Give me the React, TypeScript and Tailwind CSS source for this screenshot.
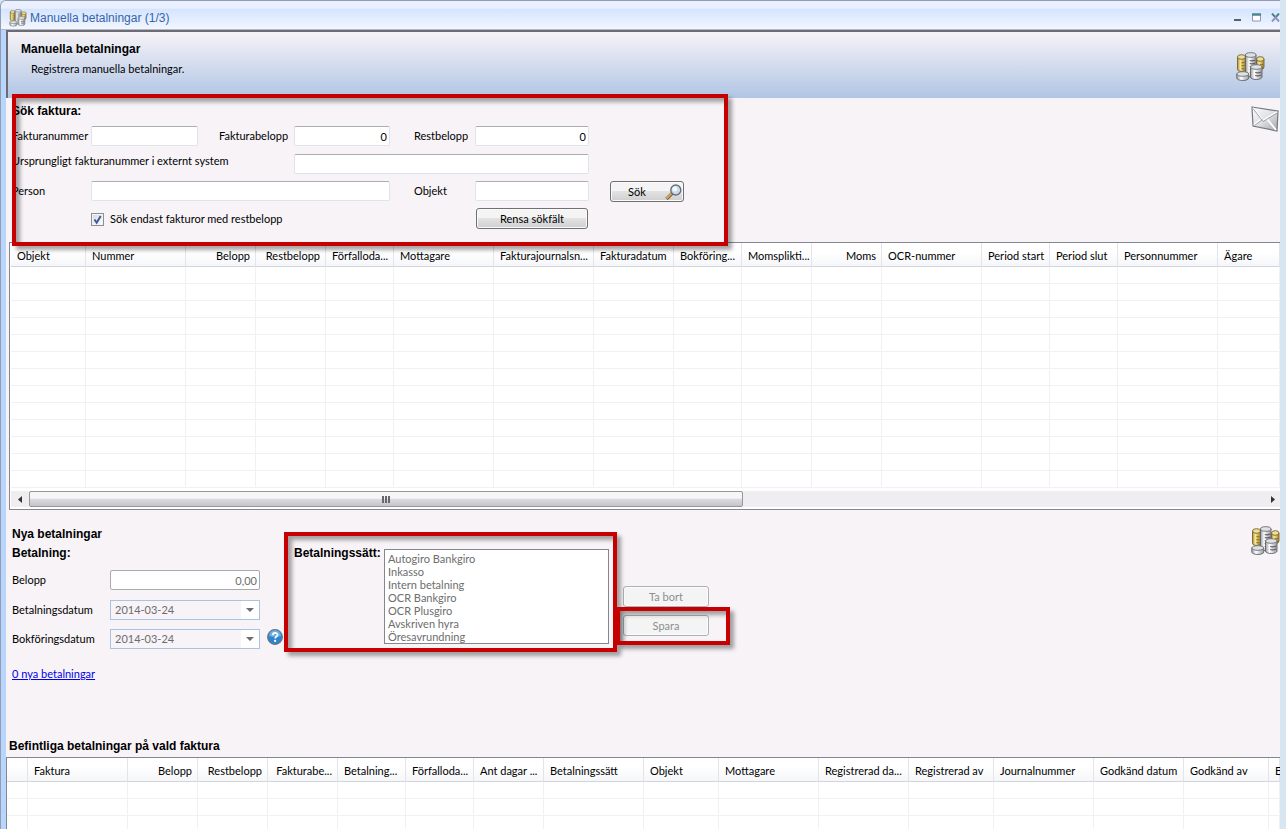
import { useState } from 'react'

type Column = { title: string; width?: number; right?: boolean }

const invoiceColumns: Column[] = [
  { title: 'Objekt', width: 75 },
  { title: 'Nummer', width: 100 },
  { title: 'Belopp', width: 70, right: true },
  { title: 'Restbelopp', width: 70, right: true },
  { title: 'Förfalloda...', width: 68 },
  { title: 'Mottagare', width: 100 },
  { title: 'Fakturajournalsn...', width: 100 },
  { title: 'Fakturadatum', width: 80 },
  { title: 'Bokföring...', width: 68 },
  { title: 'Momsplikti...', width: 70 },
  { title: 'Moms', width: 70, right: true },
  { title: 'OCR-nummer', width: 100 },
  { title: 'Period start', width: 68 },
  { title: 'Period slut', width: 68 },
  { title: 'Personnummer', width: 100 },
  { title: 'Ägare' },
]

const paymentColumns: Column[] = [
  { title: '', width: 21 },
  { title: 'Faktura', width: 100 },
  { title: 'Belopp', width: 70, right: true },
  { title: 'Restbelopp', width: 70, right: true },
  { title: 'Fakturabe...', width: 70, right: true },
  { title: 'Betalning...', width: 68 },
  { title: 'Förfalloda...', width: 68 },
  { title: 'Ant dagar ...', width: 70 },
  { title: 'Betalningssätt', width: 100 },
  { title: 'Objekt', width: 75 },
  { title: 'Mottagare', width: 100 },
  { title: 'Registrerad da...', width: 90 },
  { title: 'Registrerad av', width: 85 },
  { title: 'Journalnummer', width: 100 },
  { title: 'Godkänd datum', width: 90 },
  { title: 'Godkänd av', width: 85 },
  { title: 'E' },
]

const methods = [
  'Autogiro Bankgiro',
  'Inkasso',
  'Intern betalning',
  'OCR Bankgiro',
  'OCR Plusgiro',
  'Avskriven hyra',
  'Öresavrundning',
]

const headingClass = "font-['Liberation_Sans',Arial,sans-serif] text-xs leading-[14px] font-bold"
const inputClass =
  'h-5 rounded-[2px] border border-[#e2e3ea] border-t-[#abadb3] bg-white px-[2px] outline-none'
const buttonClass =
  'h-[21px] rounded-[3px] border border-[#707070] bg-linear-to-b from-[#f4f4f4] from-45% via-[#e2e2e2] via-50% to-[#cfcfcf] shadow-[inset_0_0_0_1px_#fafafa]'
const disabledButtonClass =
  'h-[21px] w-[86px] rounded-[3px] border border-[#adb2b5] bg-[#f4f4f4] text-[#8e8e8e] shadow-[inset_0_0_0_1px_#fcfcfc]'

function Stack({ x, y, w, h, gold }: { x: number; y: number; w: number; h: number; gold?: boolean }) {
  const rx = w / 2
  const ridges = []
  for (let i = 4; i < h; i += 3) ridges.push(i)
  return (
    <g>
      <path
        d={`M${x} ${y}v${h}a${rx} 2.5 0 0 0 ${w} 0v${-h}z`}
        fill={gold ? 'url(#gold)' : 'url(#silver)'}
        stroke={gold ? '#75622a' : '#626266'}
        strokeWidth="0.9"
      />
      {ridges.map(r => (
        <path
          key={r}
          d={`M${x + (gold ? rx : rx - 1)} ${y + r + 1.5}q${rx / 2} 1 ${gold ? rx - 1 : rx} -0.5`}
          fill="none"
          stroke={gold ? '#8c701c' : '#5a5a60'}
          strokeWidth="1.1"
        />
      ))}
      <ellipse cx={x + rx} cy={y} rx={rx} ry="2.3" fill={gold ? '#f0df98' : '#dde3e5'} stroke={gold ? '#75622a' : '#6c6c70'} strokeWidth="0.9" />
    </g>
  )
}

function Coins({ className }: { className: string }) {
  return (
    <svg viewBox="0 0 29 30" className={className} aria-hidden="true">
      <defs>
        <linearGradient id="gold">
          <stop offset="0" stopColor="#b0902f" />
          <stop offset="0.35" stopColor="#f6e9a0" />
          <stop offset="1" stopColor="#a98420" />
        </linearGradient>
        <linearGradient id="silver">
          <stop offset="0" stopColor="#9a9c9f" />
          <stop offset="0.35" stopColor="#fff" />
          <stop offset="1" stopColor="#9a9a9f" />
        </linearGradient>
      </defs>
      <Stack x={1.5} y={5} w={8} h={12} gold />
      <Stack x={20.5} y={7} w={7.5} h={8} gold />
      <Stack x={9.5} y={3} w={10.5} h={19} />
      <Stack x={14.5} y={15} w={11.5} h={10} />
      <Stack x={0.8} y={22} w={12} h={4} />
    </svg>
  )
}

function Envelope() {
  return (
    <svg viewBox="0 0 28 26" className="h-[26px] w-7" aria-hidden="true">
      <defs>
        <linearGradient id="paper" x1="0" y1="0" x2="1" y2="1">
          <stop offset="0" stopColor="#fdfdfd" />
          <stop offset="0.5" stopColor="#dfe0e3" />
          <stop offset="1" stopColor="#a4a6ac" />
        </linearGradient>
      </defs>
      <path d="M1 1l26 4-1 20L2 20z" fill="url(#paper)" stroke="#777980" strokeWidth="1.2" />
      <path d="M2 2l10 12.500L26 6M3 19l8-6M25 24l-9-11" fill="none" stroke="#fff" strokeWidth="1.800" />
      <path d="M2 2.500l10 13L26 7M3.500 19.500l8-6" fill="none" stroke="#85878d" strokeWidth="0.800" />
    </svg>
  )
}

function Magnifier() {
  return (
    <svg viewBox="0 0 17 16" className="h-4 w-[17px]" aria-hidden="true">
      <path d="M1.5 15l6-6" stroke="#7d5a2b" strokeWidth="3.2" />
      <path d="M1.5 14.5l5-5" stroke="#d9a860" strokeWidth="1.8" />
      <circle cx="10.8" cy="6" r="5" fill="#c9dcee" stroke="#6b7078" strokeWidth="1.4" />
      <circle cx="9.8" cy="5" r="2.4" fill="#f4faff" />
    </svg>
  )
}

function HelpIcon() {
  return (
    <svg viewBox="0 0 16 16" className="h-4 w-4" aria-hidden="true">
      <circle cx="8" cy="8" r="7.4" fill="#2d85cc" stroke="#6e7277" strokeWidth="1.1" />
      <path d="M2 7a6 6 0 0 1 12 0q-6 2-12 0z" fill="#67b1e6" />
      <path d="M5.7 6.2c0-3 4.8-3 4.8-.3 0 1.7-2.3 1.6-2.3 3.6" fill="none" stroke="#fff" strokeWidth="1.7" />
      <circle cx="8.1" cy="11.9" r="1.1" fill="#fff" />
    </svg>
  )
}

// Red callout drawn over the part of the form it surrounds
function Marker({ className }: { className: string }) {
  return (
    <div
      className={`pointer-events-none absolute z-10 border-4 border-[#c60000] shadow-[4px_4px_4px_rgba(0,0,0,0.35),inset_4px_4px_4px_rgba(0,0,0,0.35)] ${className}`}
    />
  )
}

function Grid({ columns, rows, label }: { columns: Column[]; rows: number; label: string }) {
  return (
    <table aria-label={label} className="w-full table-fixed border-separate border-spacing-0 bg-white">
      <colgroup>
        {columns.map((c, i) => <col key={i} style={c.width ? { width: c.width } : undefined} />)}
      </colgroup>
      <thead>
        <tr className="h-6">
          {columns.map((c, i) => (
            <th
              key={i}
              className={`border-r border-b border-r-[#e4e4ea] border-b-[#d5d5d9] bg-linear-to-b from-white from-40% to-[#f5f6fa] pt-[2px] pb-0 font-normal whitespace-nowrap ${c.right ? 'pr-[5px] text-right' : 'pl-[6px] text-left'}`}
            >
              {c.title}
            </th>
          ))}
        </tr>
      </thead>
      <tbody>
        {Array.from({ length: rows }, (_, r) => (
          <tr key={r} className="h-[17px]">
            {columns.map((_, i) => <td key={i} className="border-r border-b border-[#f3eff3] p-0" />)}
          </tr>
        ))}
      </tbody>
    </table>
  )
}

function DateField({ id }: { id: string }) {
  return (
    <div className="flex h-5 border border-[#a9c4e2]">
      <select id={id} className="min-w-0 flex-1 appearance-none pl-1 text-[#6d6d6d] outline-none">
        <option>2014-03-24</option>
      </select>
      <span className="flex w-[18px] items-center justify-center bg-white">
        <svg viewBox="0 0 8 4" className="h-1 w-2" aria-hidden="true"><path d="M0 0h8L4 4z" fill="#6d6d6d" /></svg>
      </span>
    </div>
  )
}

export default function App() {
  const [onlyRest, setOnlyRest] = useState(true)

  return (
    <div className="flex h-screen overflow-hidden bg-[#d8e6f2] pr-[6px] font-[Lato,'Liberation_Sans',sans-serif] text-[11px] leading-[14px] text-black">
      <div className="flex min-w-0 flex-1 flex-col overflow-hidden rounded-tl-md border-t border-l border-[#8f9db5] bg-[#b9d5fb]">
        <header className="flex h-[29px] shrink-0 items-center border-b border-[#b4b8c8] bg-linear-to-b from-[#eaf0fd] from-25% via-[#d5e5ff] via-30% to-[#f2f6ff] pt-[5px] pl-2">
          <Coins className="h-[18px] w-[18px]" />
          <h1 className="ml-[3px] font-['Liberation_Sans',Arial,sans-serif] text-xs text-[#3465ac]">Manuella betalningar (1/3)</h1>
          <div className="ml-auto flex gap-[10px]">
            <button aria-label="Minimera" className="h-[9px] w-[9px]">
              <svg viewBox="0 0 9 9" className="h-[9px] w-[9px]"><path d="M1 7h7" stroke="#5d6068" strokeWidth="2" /></svg>
            </button>
            <button aria-label="Maximera" className="h-[9px] w-[9px]">
              <svg viewBox="0 0 9 9" className="h-[9px] w-[9px]">
                <path d="M.5 1.500h8v6.500h-8z" fill="#fff" stroke="#8f92c8" />
                <path d="M0 1.500h9" stroke="#4c8587" strokeWidth="2.500" />
              </svg>
            </button>
            <button aria-label="Stäng" className="h-[9px] w-[9px]">
              <svg viewBox="0 0 9 9" className="h-[9px] w-[9px]">
                <path d="M1 .5l3.500 4L8 .5" fill="none" stroke="#4c8587" strokeWidth="2" />
                <path d="M1 8.500l3.500-4 3.500 4" fill="none" stroke="#8f92c8" strokeWidth="2" />
              </svg>
            </button>
          </div>
        </header>

        <main className="ml-[5px] flex-1 bg-[#f7f3f7]">
          <div className="flex h-[68px] items-start justify-between border-t-2 border-l-2 border-[#6c6c74] bg-linear-to-b from-[#f7f3f7] to-[#b0c5e4] pr-[15px]">
            <div className="pt-[10px] pl-[13px]">
              <h2 className={headingClass}>Manuella betalningar</h2>
              <p className="mt-[6px] ml-[10px]">Registrera manuella betalningar.</p>
            </div>
            <Coins className="mt-5 h-[30px] w-[29px]" />
          </div>

          <section className="relative flex h-[144px] items-start justify-between pr-px pl-[6px]">
            <Marker className="-top-1 left-[6px] h-[152px] w-[716px]" />
            <div className="pt-[6px]">
              <h2 className={headingClass}>Sök faktura:</h2>
              <div className="mt-2 grid grid-cols-[79px_128px_75px_120px_61px_135px_74px] grid-rows-[28px_27px_27px_21px] items-start">
                <label htmlFor="nr" className="pt-[3px]">Fakturanummer</label>
                <input id="nr" className={`${inputClass} w-[107px]`} />
                <label htmlFor="amount" className="pt-[3px]">Fakturabelopp</label>
                <input id="amount" defaultValue="0" className={`${inputClass} w-24 text-right`} />
                <label htmlFor="rest" className="pt-[3px]">Restbelopp</label>
                <input id="rest" defaultValue="0" className={`${inputClass} w-[114px] text-right`} />

                <label htmlFor="ext" className="col-span-3 col-start-1">Ursprungligt fakturanummer i externt system</label>
                <input id="ext" className={`${inputClass} col-span-3 w-[295px]`} />

                <label htmlFor="person" className="col-start-1 pt-[3px]">Person</label>
                <input id="person" className={`${inputClass} col-span-3 w-[299px]`} />
                <label htmlFor="object" className="pt-[3px]">Objekt</label>
                <input id="object" className={`${inputClass} w-[114px]`} />
                <button className={`${buttonClass} flex items-center justify-between pr-px pl-[17px]`}>
                  Sök
                  <Magnifier />
                </button>

                <label className="col-span-4 col-start-2 flex items-center gap-[6px] pt-1">
                  <span className="relative h-[13px] w-[13px]">
                    <input
                      type="checkbox"
                      checked={onlyRest}
                      onChange={e => setOnlyRest(e.target.checked)}
                      className="block h-[13px] w-[13px] appearance-none border border-[#8e8f8f] bg-linear-to-br from-[#d3d8de] to-white shadow-[inset_0_0_0_1px_#f4f4f4]"
                    />
                    {onlyRest && (
                      <svg viewBox="0 0 13 13" className="pointer-events-none absolute inset-0 h-[13px] w-[13px]">
                        <path d="M3.500 6.500l2.200 3.200L9.700 3" fill="none" stroke="#3f5a9c" strokeWidth="2" />
                      </svg>
                    )}
                  </span>
                  Sök endast fakturor med restbelopp
                </label>
                <button className={`${buttonClass} ml-px w-28`}>Rensa sökfält</button>
              </div>
            </div>
            <div className="pt-2"><Envelope /></div>
          </section>

          <div className="ml-[3px] border border-r-0 border-[#828790] bg-white pl-px">
            <Grid columns={invoiceColumns} rows={13} label="Fakturor" />
            <div className="mt-[3px] mb-[2px] flex h-4 bg-[#efedef]">
              <button aria-label="Vänster" className="flex w-[18px] items-center justify-center">
                <svg viewBox="0 0 4 7" className="h-[7px] w-1"><path d="M4 0v7L0 3.500z" fill="#333" /></svg>
              </button>
              <div className="flex w-[714px] items-center justify-center gap-px rounded-[2px] border border-[#97979b] bg-linear-to-b from-[#f6f6f6] from-45% via-[#dcdce0] via-50% to-[#c4c4c9]">
                <i className="h-[7px] w-[2px] bg-[#66666b]" />
                <i className="h-[7px] w-[2px] bg-[#66666b]" />
                <i className="h-[7px] w-[2px] bg-[#66666b]" />
              </div>
              <button aria-label="Höger" className="ml-auto flex w-[14px] items-center justify-center">
                <svg viewBox="0 0 4 7" className="h-[7px] w-1"><path d="M0 0v7l4-3.500z" fill="#333" /></svg>
              </button>
            </div>
          </div>

          <section className="flex h-[229px] items-start pl-[6px]">
            <div className="w-[272px] pt-[17px]">
              <h2 className={headingClass}>Nya betalningar</h2>
              <h3 className={`${headingClass} mt-[5px]`}>Betalning:</h3>
              <div className="mt-[10px] grid grid-cols-[98px_150px_16px] grid-rows-[30px_29px_29px] items-start">
                <label htmlFor="sum" className="pt-[3px]">Belopp</label>
                <input
                  id="sum"
                  defaultValue="0,00"
                  className="h-5 rounded-[2px] border border-[#aaaaad] bg-white px-[2px] text-right text-[#6d6d6d] outline-none"
                />
                <label htmlFor="paid" className="col-start-1 pt-[3px]">Betalningsdatum</label>
                <DateField id="paid" />
                <label htmlFor="booked" className="col-start-1 pt-[3px]">Bokföringsdatum</label>
                <DateField id="booked" />
                <button aria-label="Hjälp" className="ml-[7px] h-4 w-4"><HelpIcon /></button>
              </div>
              <a href="#nya" className="mt-[9px] inline-block text-[#0000ee] underline">0 nya betalningar</a>
            </div>

            <div className="relative mt-[22px] flex h-[120px] w-[333px] items-start pl-[10px]">
              <Marker className="inset-0" />
              <label htmlFor="method" className={`${headingClass} w-[90px] pt-[14px]`}>Betalningssätt:</label>
              <select
                id="method"
                size={7}
                className="mt-[17px] h-[95px] w-[225px] overflow-hidden border border-[#828790] bg-white pt-[2px] text-[#6d6d6d] outline-none"
              >
                {methods.map(m => <option key={m} className="h-[13px] min-h-0 px-[3px] py-0 leading-[13px]">{m}</option>)}
              </select>
            </div>

            <div className="pt-[76px]">
              <button className={`${disabledButtonClass} ml-[6px] block`}>Ta bort</button>
              <div className="relative -ml-px h-[38px] w-[114px] pt-2 pl-[7px]">
                <Marker className="inset-0" />
                <button className={`${disabledButtonClass} block`}>Spara</button>
              </div>
            </div>

            <Coins className="mt-4 ml-auto h-[30px] w-[29px]" />
          </section>

          <h2 className={`${headingClass} mb-[4px] pl-[3px]`}>Befintliga betalningar på vald faktura</h2>
          <div className="border-t border-l border-[#828790]">
            <Grid columns={paymentColumns} rows={5} label="Befintliga betalningar på vald faktura" />
          </div>
        </main>
      </div>
    </div>
  )
}
